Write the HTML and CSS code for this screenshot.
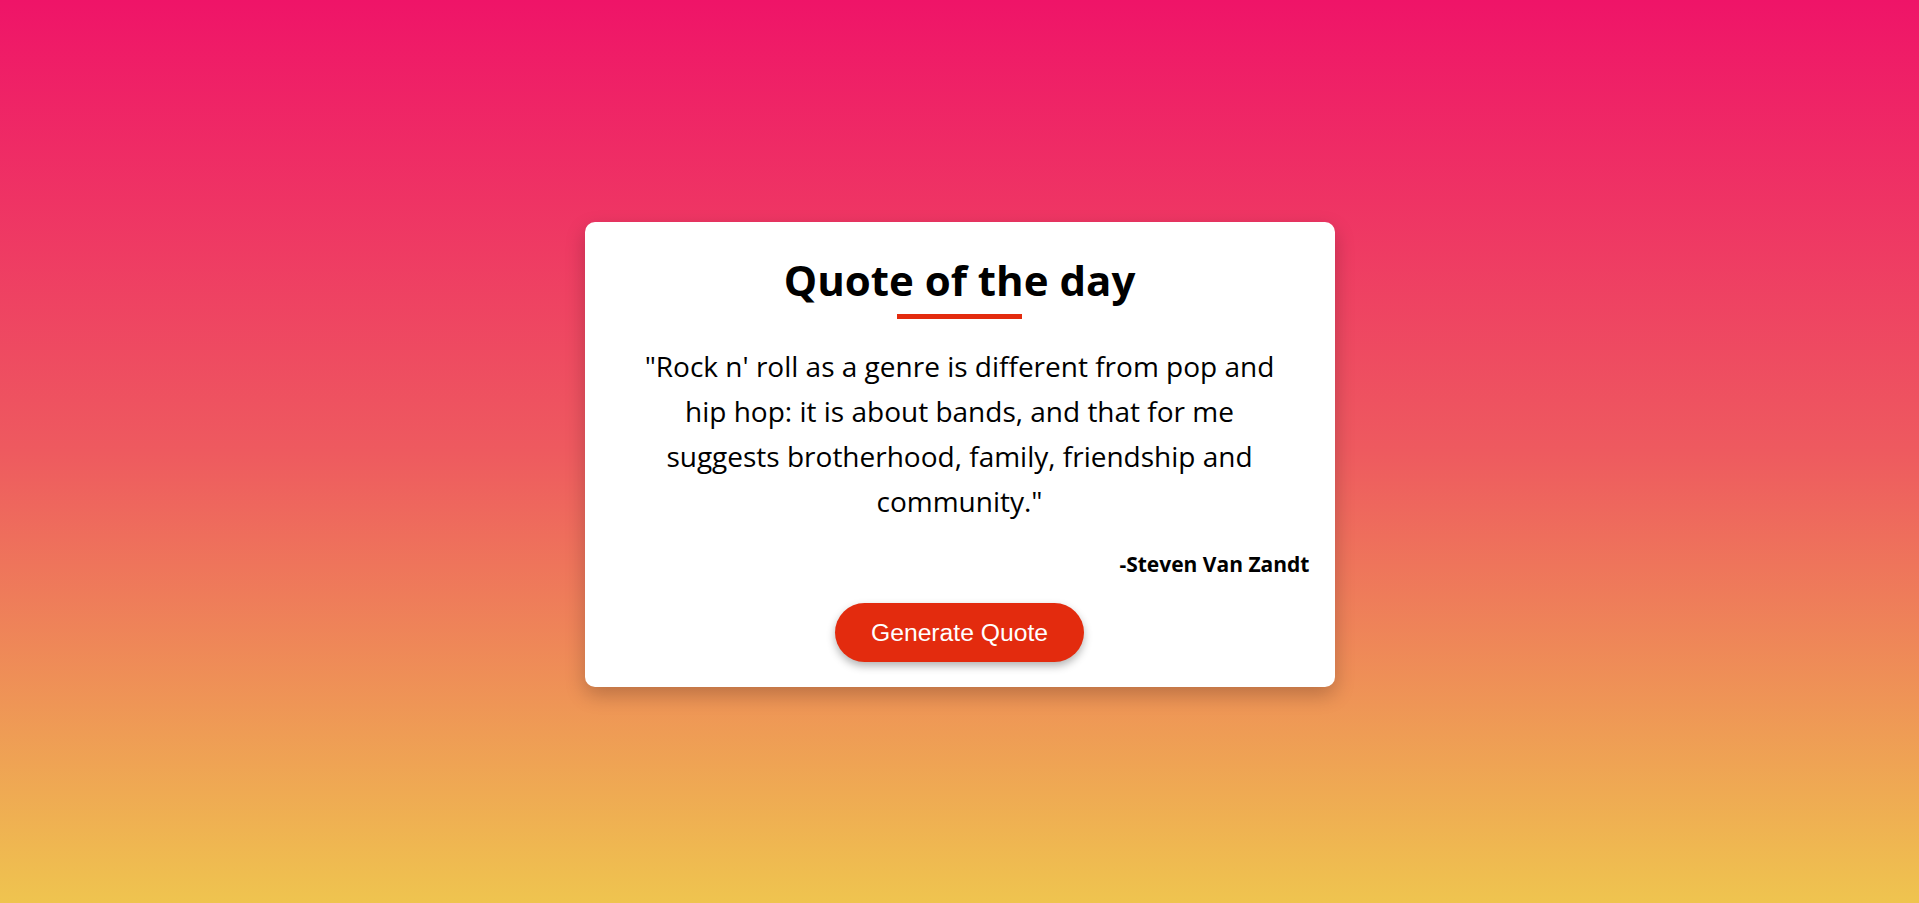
FILE: index.html
```html
<!DOCTYPE html>
<html lang="en">
<head>
<meta charset="UTF-8">
<title>Quote of the day</title>
<link rel="stylesheet" href="styles.css">
</head>
<body>
  <main class="page">
    <section class="card">
      <h1 class="title">Quote of the day</h1>
      <p class="quote">"Rock n' roll as a genre is different from pop and hip hop: it is about bands, and that for me suggests brotherhood, family, friendship and community."</p>
      <p class="author">-Steven Van Zandt</p>
      <button class="btn" type="button">Generate Quote</button>
    </section>
  </main>
</body>
</html>
```

FILE: styles.css
```css
* { box-sizing: border-box; }

html, body {
  margin: 0;
  padding: 0;
  height: 100%;
}

body {
  font-family: "Open Sans", "Noto Sans", sans-serif;
  color: #000;
  background: linear-gradient(180deg, #ef1468 0%, #ee5a5f 50%, #efc44f 100%);
}

.page {
  min-height: 100vh;
  display: flex;
  align-items: center;
  justify-content: center;
}

.card {
  width: 750px;
  background: #fff;
  border-radius: 10px;
  padding: 33px 25px 25px;
  display: flex;
  flex-direction: column;
  align-items: center;
  box-shadow: 0 8px 20px rgba(0, 0, 0, 0.22);
  margin-top: 5px;
}

.title {
  margin: 0;
  font-size: 42px;
  line-height: 50px;
  font-weight: 700;
  text-align: center;
}

.title::after {
  content: "";
  display: block;
  width: 125px;
  height: 5px;
  background: #e32b0e;
  margin: 9px auto 0;
}

.quote {
  margin: 25px 0 0;
  max-width: 645px;
  font-size: 28px;
  line-height: 45px;
  text-align: center;
}

.author {
  align-self: stretch;
  margin: 25px 0 0;
  font-size: 21px;
  line-height: 30px;
  font-weight: 700;
  text-align: right;
}

.btn {
  margin-top: 24px;
  font-family: "Liberation Sans", Arial, sans-serif;
  font-size: 24.7px;
  line-height: 29px;
  padding: 15px 36px;
  color: #fff;
  background: #e32b0e;
  border: none;
  border-radius: 30px;
  box-shadow: 0 4px 8px rgba(0, 0, 0, 0.3);
  cursor: pointer;
}
```
